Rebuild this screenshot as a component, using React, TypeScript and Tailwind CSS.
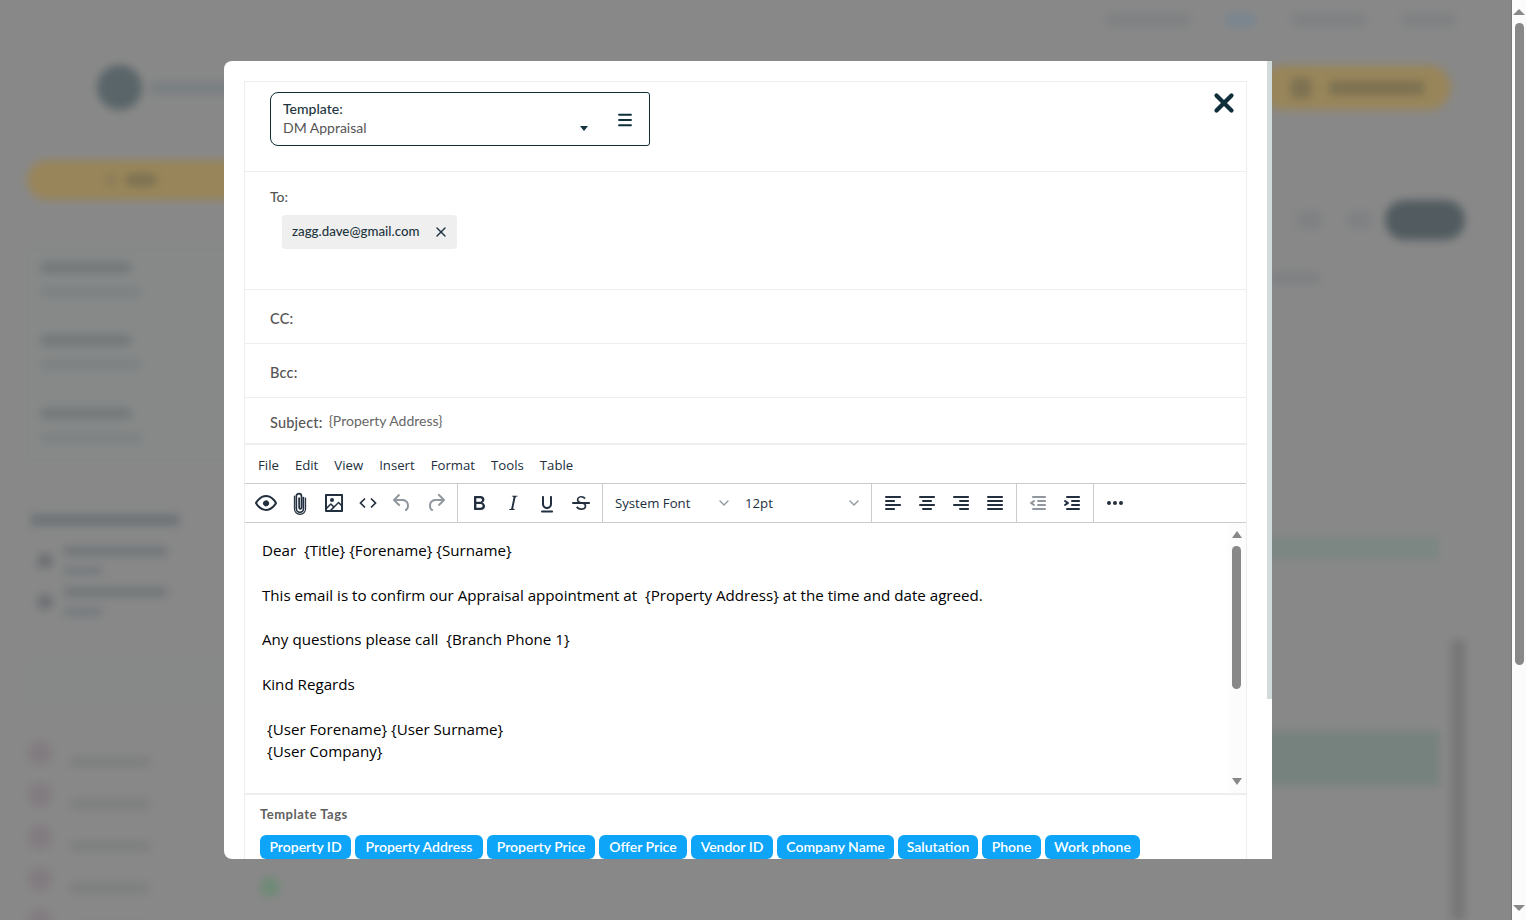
import React from 'react';
import { Menu, X, ChevronDown } from 'lucide-react';

const uiFont = "font-['Lato','Liberation_Sans',sans-serif]";
const editorFont = "font-['Open_Sans','Liberation_Sans',sans-serif]";

const MENU = ['File', 'Edit', 'View', 'Insert', 'Format', 'Tools', 'Table'];
const TAGS = [
  { label: 'Property ID', width: 'w-[91px]' },
  { label: 'Property Address', width: 'w-[128px]' },
  { label: 'Property Price', width: 'w-[108px]' },
  { label: 'Offer Price', width: 'w-[88px]' },
  { label: 'Vendor ID', width: 'w-[82px]' },
  { label: 'Company Name', width: 'w-[117px]' },
  { label: 'Salutation', width: 'w-[80px]' },
  { label: 'Phone', width: 'w-[59px]' },
  { label: 'Work phone', width: 'w-[95px]' },
];

const ICONS = {
  eye: 'M3.5 12.5c.5.8 1.1 1.6 1.8 2.3 2 2 4.2 3.2 6.7 3.2s4.7-1.2 6.7-3.2a16.2 16.2 0 0 0 2.1-2.8 15.7 15.7 0 0 0-2.1-2.8c-2-2-4.2-3.2-6.7-3.2a9.2 9.2 0 0 0-6.7 3.2A16.2 16.2 0 0 0 3.2 12c0 .2.2.3.3.5zm-2.4-1l.7-1.2L4 7.8C6.2 5.4 8.9 4 12 4c3 0 5.8 1.4 8.1 3.8a18.2 18.2 0 0 1 2.8 3.7v1l-.7 1.2-2.1 2.5c-2.3 2.4-5 3.8-8.1 3.8a11 11 0 0 1-8.1-3.8 18.2 18.2 0 0 1-2.8-3.7 1 1 0 0 1 0-1zm12.7 3.3a3 3 0 1 1-3.5-4.9 3 3 0 0 1 3.5 4.9z',
  image: 'M5 15.7l3.3-3.2c.3-.3.7-.3 1 0L12 15l4.1-4c.3-.4.8-.4 1 0l2 1.9V5H5v10.7zM5 18V19h3l2.8-2.9-2-2L5 17.9zm14-3l-2.5-2.4-6.4 6.5H19v-4zM4 3h16c.6 0 1 .4 1 1v16c0 .6-.4 1-1 1H4a1 1 0 0 1-1-1V4c0-.6.4-1 1-1zm6 8a2 2 0 1 0 0-4 2 2 0 0 0 0 4z',
  undo: 'M6.4 8H12c3.7 0 6.2 2 6.8 5.1.6 2.7-.4 5.6-2.3 6.8a1 1 0 0 1-1-1.8c1.1-.6 1.8-2.7 1.4-4.6-.5-2.1-2.1-3.5-4.9-3.5H6.4l3.3 3.3a1 1 0 1 1-1.4 1.4l-5-5a1 1 0 0 1 0-1.4l5-5a1 1 0 0 1 1.4 1.4L6.4 8z',
  redo: 'M17.6 10H12c-2.8 0-4.4 1.4-4.9 3.5-.4 2 .3 4 1.4 4.6a1 1 0 1 1-1 1.8c-2-1.2-2.9-4.1-2.3-6.8.6-3 3-5.1 6.8-5.1h5.6l-3.3-3.3a1 1 0 1 1 1.4-1.4l5 5a1 1 0 0 1 0 1.4l-5 5a1 1 0 0 1-1.4-1.4l3.3-3.3z',
  bold: 'M7.8 19c-.3 0-.5 0-.6-.2l-.2-.5V5.7c0-.2 0-.4.2-.5l.6-.2h5c1.5 0 2.7.3 3.5 1 .7.6 1.1 1.4 1.1 2.5a3 3 0 0 1-.6 1.9c-.4.6-1 1-1.6 1.2.4.1.9.3 1.3.6s.8.7 1 1.2c.4.4.5 1 .5 1.6 0 1.3-.4 2.3-1.3 3-.8.7-2.1 1-3.8 1H7.8zm5-8.3c.6 0 1.2-.1 1.6-.5.4-.3.6-.7.6-1.3 0-1.1-.8-1.7-2.3-1.7H9.3v3.5h3.4zm.5 6c.7 0 1.3-.1 1.7-.4.4-.4.6-.9.6-1.5s-.2-1-.7-1.4c-.4-.3-1-.4-2-.4H9.4v3.8h4z',
  italic: 'M16.7 4.7l-.1.9h-.3c-.6 0-1 0-1.4.3-.3.3-.4.6-.5 1.1l-2.1 9.8v.6c0 .5.4.8 1.4.8h.2l-.2.8H8l.2-.8h.2c1.1 0 1.8-.5 2-1.5l2-9.8.1-.5c0-.6-.4-.8-1.4-.8h-.3l.2-.9h5.8z',
  underline: 'M16 5c.6 0 1 .4 1 1v7c0 2.8-2.2 5-5 5s-5-2.2-5-5V6c0-.6.4-1 1-1s1 .4 1 1v7c0 1.7 1.3 3 3 3s3-1.3 3-3V6c0-.6.4-1 1-1zM7 19.5h10c.6 0 1 .4 1 1s-.4 1-1 1H7a1 1 0 1 1 0-2z',
  strike: 'M15.6 8.5c-.5-.7-1-1.1-1.3-1.3-.6-.4-1.3-.6-2-.6-2.7 0-2.8 1.7-2.8 2.1 0 1.6 1.8 2 3.2 2.3 4.4.9 4.6 2.8 4.6 3.9 0 1.4-.7 4.1-5 4.1A6.2 6.2 0 0 1 7 16.4l1.5-1.1c.4.6 1.6 2 3.7 2 1.6 0 2.5-.4 3-1 .3-.4.4-.9.4-1.3 0-1.7-2.2-2.1-3.6-2.4-1.6-.4-4.2-1.1-4.2-3.8 0-2.7 2.3-3.9 4.6-3.9 2.2 0 3.7 1 4.5 2.3l-1.3.3zM4 11h16c.6 0 1 .4 1 1s-.4 1-1 1H4a1 1 0 0 1 0-2z',
  alignLeft: 'M5 5h14c.6 0 1 .4 1 1s-.4 1-1 1H5a1 1 0 1 1 0-2zm0 4h8c.6 0 1 .4 1 1s-.4 1-1 1H5a1 1 0 1 1 0-2zm0 8h8c.6 0 1 .4 1 1s-.4 1-1 1H5a1 1 0 0 1 0-2zm0-4h14c.6 0 1 .4 1 1s-.4 1-1 1H5a1 1 0 0 1 0-2z',
  alignCenter: 'M5 5h14c.6 0 1 .4 1 1s-.4 1-1 1H5a1 1 0 1 1 0-2zm3 4h8c.6 0 1 .4 1 1s-.4 1-1 1H8a1 1 0 1 1 0-2zm0 8h8c.6 0 1 .4 1 1s-.4 1-1 1H8a1 1 0 0 1 0-2zm-3-4h14c.6 0 1 .4 1 1s-.4 1-1 1H5a1 1 0 0 1 0-2z',
  alignRight: 'M5 5h14c.6 0 1 .4 1 1s-.4 1-1 1H5a1 1 0 1 1 0-2zm6 4h8c.6 0 1 .4 1 1s-.4 1-1 1h-8a1 1 0 0 1 0-2zm0 8h8c.6 0 1 .4 1 1s-.4 1-1 1h-8a1 1 0 0 1 0-2zm-6-4h14c.6 0 1 .4 1 1s-.4 1-1 1H5a1 1 0 0 1 0-2z',
  justify: 'M5 5h14c.6 0 1 .4 1 1s-.4 1-1 1H5a1 1 0 1 1 0-2zm0 4h14c.6 0 1 .4 1 1s-.4 1-1 1H5a1 1 0 1 1 0-2zm0 4h14c.6 0 1 .4 1 1s-.4 1-1 1H5a1 1 0 0 1 0-2zm0 4h14c.6 0 1 .4 1 1s-.4 1-1 1H5a1 1 0 0 1 0-2z',
  outdent: 'M7 5h12c.6 0 1 .4 1 1s-.4 1-1 1H7a1 1 0 1 1 0-2zm5 4h7c.6 0 1 .4 1 1s-.4 1-1 1h-7a1 1 0 0 1 0-2zm0 4h7c.6 0 1 .4 1 1s-.4 1-1 1h-7a1 1 0 0 1 0-2zm-5 4h12a1 1 0 0 1 0 2H7a1 1 0 0 1 0-2zm1.6-3.8a1 1 0 0 1-1.2 1.6l-3-2a1 1 0 0 1 0-1.6l3-2a1 1 0 0 1 1.2 1.6L6.8 12l1.8 1.2z',
  indent: 'M7 5h12c.6 0 1 .4 1 1s-.4 1-1 1H7a1 1 0 1 1 0-2zm5 4h7c.6 0 1 .4 1 1s-.4 1-1 1h-7a1 1 0 0 1 0-2zm0 4h7c.6 0 1 .4 1 1s-.4 1-1 1h-7a1 1 0 0 1 0-2zm-5 4h12a1 1 0 0 1 0 2H7a1 1 0 0 1 0-2zm-2.6-3.8L6.2 12l-1.8-1.2a1 1 0 0 1 1.2-1.6l3 2a1 1 0 0 1 0 1.6l-3 2a1 1 0 1 1-1.2-1.6z',
  more: 'M6 10a2 2 0 0 0-2 2c0 1.1.9 2 2 2a2 2 0 0 0 2-2 2 2 0 0 0-2-2zm12 0a2 2 0 0 0-2 2c0 1.1.9 2 2 2a2 2 0 0 0 2-2 2 2 0 0 0-2-2zm-6 0a2 2 0 0 0-2 2c0 1.1.9 2 2 2a2 2 0 0 0 2-2 2 2 0 0 0-2-2z',
};

const ToolIcon = ({ d, muted }: { d: string; muted?: boolean }) => (
  <span className="flex h-[34px] w-[34px] items-center justify-center">
    <svg width="24" height="24" viewBox="0 0 24 24" className={muted ? 'fill-[#222f3e]/50' : 'fill-[#222f3e]'}>
      <path d={d} />
    </svg>
  </span>
);

const Divider = () => <span className="h-full w-px shrink-0 bg-[#cccccc]" />;

const Toolbar = () => (
  <div className={`${editorFont} flex h-[40px] items-center border-y border-[#cccccc] text-[13.2px] text-[#222f3e]`}>
    <div className="flex items-center pl-[4px] pr-[4px]">
      <ToolIcon d={ICONS.eye} />
      <span className="flex h-[34px] w-[34px] items-center justify-center">
        <svg width="14" height="24" viewBox="0 0 14 24" fill="none" stroke="#222f3e" strokeWidth="1.7" strokeLinecap="round">
          <path d="M10.5 6.5v11.2a3.6 3.6 0 0 1-7.2 0V5.2a2.6 2.6 0 0 1 5.2 0v11.4a1.2 1.2 0 0 1-2.4 0V7" />
          <path d="M12.6 7v10.8a5.6 5.6 0 0 1-11.2 0V5" strokeWidth="1.1" />
        </svg>
      </span>
      <ToolIcon d={ICONS.image} />
      <span className="flex h-[34px] w-[34px] items-center justify-center">
        <svg width="18" height="12" viewBox="0 0 18 12" fill="none" stroke="#222f3e" strokeWidth="1.7">
          <path d="M6 1.5 1.5 6 6 10.5M12 1.5 16.5 6 12 10.5" />
        </svg>
      </span>
      <ToolIcon d={ICONS.undo} muted />
      <ToolIcon d={ICONS.redo} muted />
    </div>
    <Divider />
    <div className="flex items-center px-[4px]">
      <ToolIcon d={ICONS.bold} />
      <ToolIcon d={ICONS.italic} />
      <ToolIcon d={ICONS.underline} />
      <ToolIcon d={ICONS.strike} />
    </div>
    <Divider />
    <div className="flex w-[130px] items-center justify-between pl-[12px] pr-[1px]">
      <span className="pt-[2px]">System Font</span>
      <ChevronDown size={16} className="text-[#222f3e]/50" />
    </div>
    <div className="flex w-[138px] items-center justify-between pl-[12px] pr-[9px]">
      <span className="pt-[2px]">12pt</span>
      <ChevronDown size={16} className="text-[#222f3e]/50" />
    </div>
    <Divider />
    <div className="flex items-center px-[4px]">
      <ToolIcon d={ICONS.alignLeft} />
      <ToolIcon d={ICONS.alignCenter} />
      <ToolIcon d={ICONS.alignRight} />
      <ToolIcon d={ICONS.justify} />
    </div>
    <Divider />
    <div className="flex items-center px-[4px]">
      <ToolIcon d={ICONS.outdent} muted />
      <ToolIcon d={ICONS.indent} />
    </div>
    <Divider />
    <div className="flex items-center px-[4px]">
      <ToolIcon d={ICONS.more} />
    </div>
  </div>
);

const TemplateSelect = () => (
  <div className="flex h-[54px] w-[380px] items-stretch rounded-l-[8px] rounded-r-[3px] border border-[#0f2f3a]">
    <div className="flex flex-1 flex-col pl-[12px] pt-[6px] leading-[19px]">
      <span className="text-[14px] font-medium text-[#1d3540]">Template:</span>
      <span className="text-[14px] text-[#555555]">DM Appraisal</span>
    </div>
    <div className="flex items-end pb-[14px] pr-[28px]">
      <span className="h-0 w-0 border-x-[4px] border-t-[5px] border-x-transparent border-t-[#17333d]" />
    </div>
    <div className="flex items-center pr-[15px] pt-[1px]">
      <Menu size={18} strokeWidth={2.4} className="text-[#0f2f3a]" />
    </div>
  </div>
);

const AddressRow = ({ label }: { label: string }) => (
  <div className="flex h-[54px] items-center border-b border-[#eeeeee] pl-[25px] pt-[4px] text-[14.5px] font-medium tracking-[.2px] text-[#555555]">{label}</div>
);

const Modal = () => (
  <div className={`${uiFont} absolute left-[224px] top-[61px] h-[798px] w-[1048px] overflow-hidden rounded-l-[8px] bg-white`}>
    <div className="absolute right-0 top-0 h-[638px] w-[5px] bg-[#d3dadb]" />
    <div className="ml-[20px] mt-[20px] w-[1003px] border border-[#eeeeee]">
      <div className="relative h-[90px] border-b border-[#eeeeee] pl-[25px] pt-[10px]">
        <TemplateSelect />
        <X size={30} strokeWidth={3.4} className="absolute right-[7px] top-[6px] text-[#0f2f3a]" />
      </div>
      <div className="h-[118px] border-b border-[#eeeeee] pl-[25px] pt-[16px]">
        <div className="text-[14px] font-medium leading-[18px] text-[#555555]">To:</div>
        <div className="ml-[12px] mt-[9px] flex h-[34px] w-[175px] items-center justify-between rounded-[4px] bg-[#efefef] pl-[10px] pr-[8px]">
          <span className="text-[13.3px] font-medium text-[#1d3540]">zagg.dave@gmail.com</span>
          <X size={16} className="text-[#1d3540]" />
        </div>
      </div>
      <AddressRow label="CC:" />
      <AddressRow label="Bcc:" />
      <div className="flex h-[47px] items-center gap-[6px] border-b-2 border-[#eeeeee] pl-[25px] text-[14px]">
        <span className="mt-[5px] text-[14.5px] font-medium tracking-[.2px] text-[#555555]">Subject:</span>
        <span className="mt-[-1px] text-[#666666]">{'{Property Address}'}</span>
      </div>
      <div className={`${editorFont} flex h-[38px] items-center gap-[16px] pl-[13px] pt-[3px] text-[13.2px] text-[#222f3e]`}>
        {MENU.map((item) => <span key={item}>{item}</span>)}
      </div>
      <Toolbar />
      <div className="flex h-[272px] border-b-2 border-[#eeeeee]">
        <div className={`${editorFont} flex-1 pl-[17px] pt-[16px] text-[15.15px] leading-[22.4px] text-black`}>
          <p>Dear&nbsp; {'{Title} {Forename} {Surname}'}</p>
          <p className="mt-[22.3px]">This email is to confirm our Appraisal appointment at&nbsp; {'{Property Address}'} at the time and date agreed.</p>
          <p className="mt-[22.3px]">Any questions please call&nbsp; {'{Branch Phone 1}'}</p>
          <p className="mt-[22.3px]">Kind Regards</p>
          <p className="mt-[22.3px] pl-[5px]">{'{User Forename} {User Surname}'}</p>
          <p className="pl-[5px]">{'{User Company}'}</p>
        </div>
        <div className="flex w-[18px] flex-col items-center bg-[#fcfcfc] pr-[1px] pt-[8px]">
          <span className="h-0 w-0 border-x-[5px] border-b-[7px] border-x-transparent border-b-[#888888]" />
          <span className="mt-[8px] h-[143px] w-[9px] rounded-full bg-[#888888]" />
          <span className="mt-auto mb-[8px] h-0 w-0 border-x-[5px] border-t-[7px] border-x-transparent border-t-[#888888]" />
        </div>
      </div>
      <div className="pl-[15px] pt-[12px]">
        <div className="text-[13px] font-bold leading-[14px] tracking-[.5px] text-[#5f5f5f]">Template Tags</div>
        <div className="mt-[14px] flex gap-[4px]">
          {TAGS.map((tag) => (
            <span key={tag.label} className={`${tag.width} whitespace-nowrap rounded-[6px] bg-[#0ea5f9] py-[3px] text-center text-[14px] font-semibold leading-[18px] text-white`}>{tag.label}</span>
          ))}
        </div>
      </div>
    </div>
  </div>
);

// The page behind the dialog, only seen blurred and already dimmed
const Bar = ({ className }: { className: string }) => <div className={`rounded ${className}`} />;

const BackgroundPage = () => (
  <div className="relative h-[920px] w-[1511px] bg-[#888888] blur-[4px]">
    <div className="flex h-[40px] items-center justify-end gap-[35px] pr-[55px]">
      <Bar className="h-[12px] w-[85px] bg-[#7e8082]" />
      <Bar className="h-[12px] w-[30px] bg-[#788690]" />
      <Bar className="h-[12px] w-[75px] bg-[#7e8082]" />
      <Bar className="h-[12px] w-[55px] bg-[#7e8082]" />
    </div>
    <div className="flex h-[120px] items-start justify-between pl-[97px] pr-[60px] pt-[25px]">
      <div className="flex items-center gap-[8px]">
        <div className="h-[45px] w-[45px] rounded-full bg-[#5a6569]" />
        <Bar className="h-[14px] w-[120px] bg-[#7a8082]" />
      </div>
      <div className="flex h-[45px] w-[190px] items-center gap-[18px] rounded-full bg-[#98855a] pl-[30px]">
        <div className="h-[20px] w-[20px] rounded bg-[#7c7152]" />
        <Bar className="h-[14px] w-[95px] bg-[#7c7152]" />
      </div>
    </div>
    <div className="flex">
      <div className="ml-[27px] flex w-[278px] flex-col">
        <div className="flex h-[40px] items-center justify-center gap-[10px] rounded-full bg-[#98855a] pr-[70px]">
          <Bar className="h-[10px] w-[10px] bg-[#857858]" />
          <Bar className="h-[12px] w-[30px] bg-[#7c7152]" />
        </div>
        <div className="mt-[48px] flex h-[214px] flex-col gap-[39px] border border-[#818584] bg-[#868988] pl-[13px] pt-[13px]">
          {[0, 1, 2].map((i) => (
            <div key={i} className="flex flex-col gap-[14px]">
              <Bar className="h-[11px] w-[90px] bg-[#74787a]" />
              <Bar className="h-[9px] w-[100px] bg-[#7d8082]" />
            </div>
          ))}
        </div>
        <Bar className="mt-[52px] ml-[3px] h-[12px] w-[150px] bg-[#6f7477]" />
        <div className="mt-[20px] flex flex-col gap-[12px] pl-[10px]">
          {[0, 1].map((i) => (
            <div key={i} className="flex items-center gap-[10px]">
              <div className="h-[16px] w-[16px] rounded-full bg-[#6d7073]" />
              <div className="flex flex-col gap-[10px]">
                <Bar className="h-[10px] w-[105px] bg-[#72777a]" />
                <Bar className="h-[9px] w-[40px] bg-[#767b7e]" />
              </div>
            </div>
          ))}
        </div>
        <div className="mt-[48px] h-[38px] border border-[#828685] bg-[#868988]" />
        <div className="mt-[39px] flex flex-col gap-[16px] pl-[1px]">
          {[0, 1, 2, 3, 4].map((i) => (
            <div key={i} className="flex h-[26px] items-start gap-[18px]">
              <div className="h-[24px] w-[24px] rounded-full bg-[#827c80]" />
              <Bar className="mt-[16px] h-[10px] w-[80px] bg-[#7d7e7f]" />
              {i === 3 && <div className="ml-[92px] mt-[10px] h-[20px] w-[20px] rounded-full bg-[#6f8a76]" />}
            </div>
          ))}
        </div>
      </div>
      <div className="ml-[25px] flex flex-1 flex-col pr-[46px]">
        <div className="mt-[40px] flex h-[40px] items-center justify-end">
          <Bar className="h-[18px] w-[25px] bg-[#7f8183]" />
          <Bar className="ml-[25px] h-[18px] w-[25px] bg-[#7f8183]" />
          <div className="ml-[13px] h-[40px] w-[80px] rounded-full bg-[#525c60]" />
        </div>
        <div className="mt-[32px] flex justify-end pr-[145px]">
          <Bar className="h-[12px] w-[50px] bg-[#7e8082]" />
        </div>
        <div className="mt-[46px] h-[290px] border border-[#858787] pt-[205px] pr-[25px]">
          <div className="h-[24px] bg-[#7c8783]" />
        </div>
        <div className="mt-[111px] mr-[25px] h-[55px] bg-[#76827d]" />
      </div>
    </div>
    <div className="absolute right-[46px] top-[640px] h-[280px] w-[14px] bg-[#767676]" />
  </div>
);

const PageScrollbar = () => (
  <div className="flex h-[920px] w-[15px] flex-col items-center border-l border-[#777777] bg-[#fbfbfb] pt-[9px]">
    <span className="h-0 w-0 border-x-[6px] border-b-[6px] border-x-transparent border-b-[#888888]" />
    <span className="mt-[8px] h-[642px] w-[9px] rounded-full bg-[#888888]" />
    <span className="mt-auto mb-[9px] h-0 w-0 border-x-[6px] border-t-[6px] border-x-transparent border-t-[#888888]" />
  </div>
);

export default function App() {
  return (
    <div className="flex h-[920px] w-[1526px] overflow-hidden">
      <div className="relative h-[920px] w-[1511px] shrink-0 overflow-hidden bg-[#888888]">
        <BackgroundPage />
        <Modal />
      </div>
      <PageScrollbar />
    </div>
  );
}
